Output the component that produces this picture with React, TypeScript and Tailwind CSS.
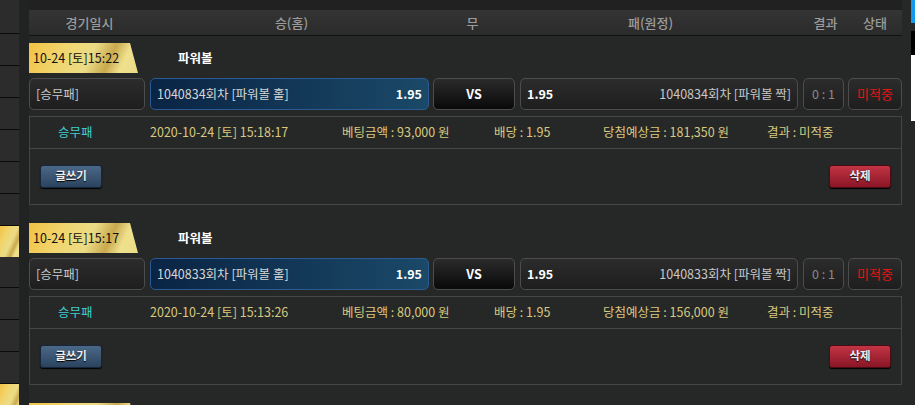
import React from 'react'

const gold =
  'bg-[linear-gradient(115deg,#f2c244_0%,#f1d56e_30%,#ecdc86_55%,#c9a94e_72%,#efe08e_84%,#eadb86_100%)]'

type Bet = {
  time: string
  round: string
  placed: string
  amount: string
  payout: string
}

const bets: Bet[] = [
  { time: '10-24 [토]15:22', round: '1040834', placed: '2020-10-24 [토] 15:18:17', amount: '93,000', payout: '181,350' },
  { time: '10-24 [토]15:17', round: '1040833', placed: '2020-10-24 [토] 15:13:26', amount: '80,000', payout: '156,000' },
  { time: '10-24 [토]15:12', round: '1040832', placed: '2020-10-24 [토] 15:08:40', amount: '50,000', payout: '97,500' },
]

function Sidebar() {
  const cells = [34, 32, 32, 32, 32, 32, 32, 31, 31, 32, 32, 32, 32]
  return (
    <div className="w-[19px] shrink-0 flex flex-col">
      {cells.map((h, i) => (
        <div
          key={i}
          style={{ height: h }}
          className={
            i === 7 || i === 12
              ? `${gold} shrink-0`
              : 'shrink-0 bg-[#2c2c2c] border-b border-[#0b0b0b]'
          }
        />
      ))}
    </div>
  )
}

function Header() {
  return (
    <div className="h-[26px] shrink-0 flex items-center bg-[linear-gradient(#343434,#2b2b2b)] border-b border-[#111] text-[13px] font-medium text-[#9c9c9c]">
      <div className="w-[121px] text-center">경기일시</div>
      <div className="w-[283px] text-center">승(홈)</div>
      <div className="w-[87px] text-center pr-[8px]">무</div>
      <div className="w-[283px] text-center pr-[22px]">패(원정)</div>
      <div className="w-[45px] text-center">결과</div>
      <div className="w-[54px] text-center">상태</div>
    </div>
  )
}

const box =
  'h-[32px] shrink-0 rounded-[5px] border flex items-center text-[12.5px]'
const dark = 'border-[#4c4c4c] bg-[linear-gradient(#2c2c2c,#1e1e1e)]'

function Card({ bet }: { bet: Bet }) {
  return (
    <div className="shrink-0 pt-[7px] pb-[11px]">
      <div className="flex items-center h-[30px]">
        <div
          className={`${gold} w-[109px] h-[30px] flex items-center pl-[4px] text-[12.5px] text-[#111] [clip-path:polygon(0_0,101px_0,109px_100%,0_100%)]`}
        >
          {bet.time}
        </div>
        <div className="ml-[40px] text-[12.5px] font-bold text-white">파워볼</div>
      </div>

      <div className="mt-[5px] flex">
        <div className={`${box} ${dark} w-[116px] pl-[6px] text-[#c8c8c8]`}>
          [승무패]
        </div>
        <div className={`${box} ml-[5px] w-[279px] px-[6px] justify-between border-[#2c5a92] bg-[linear-gradient(90deg,#0a2444,#1b4968)] text-[#d6d6d6]`}>
          <span>{bet.round}회차 [파워볼 홀]</span>
          <span className="font-bold text-white">1.95</span>
        </div>
        <div className={`${box} ml-[4px] w-[82px] justify-center border-[#4c4c4c] bg-[linear-gradient(#2b2b2b,#090909)] font-bold text-white`}>
          VS
        </div>
        <div className={`${box} ${dark} ml-[5px] w-[278px] px-[6px] justify-between text-[#c8c8c8]`}>
          <span className="font-bold text-white">1.95</span>
          <span>{bet.round}회차 [파워볼 짝]</span>
        </div>
        <div className={`${box} ${dark} ml-[5px] w-[41px] justify-center text-[#8a8a8a]`}>
          0 : 1
        </div>
        <div className={`${box} ${dark} ml-[4px] w-[54px] justify-center text-[13px] text-[#e51515]`}>
          미적중
        </div>
      </div>

      <div className="mt-[6px] w-[873px] border border-[#454545]">
        <div className="h-[32px] flex items-center border-b border-[#454545] text-[12.5px] text-[#d9c97f]">
          <span className="w-[120px] pl-[28px] text-[#3fcfcf]">승무패</span>
          <span className="w-[192px]">{bet.placed}</span>
          <span className="w-[152px]">베팅금액 : {bet.amount} 원</span>
          <span className="w-[109px]">배당 : 1.95</span>
          <span className="w-[164px]">당첨예상금 : {bet.payout} 원</span>
          <span>결과 : 미적중</span>
        </div>
        <div className="h-[55px] flex items-center justify-between px-[10px] pb-[1px]">
          <button className="w-[62px] h-[23px] rounded-[3px] border border-[#17253a] bg-[linear-gradient(#4b6888,#2b435e)] text-[11.5px] font-bold text-[#eeeeee] shadow-[0_1px_1px_#000] [text-shadow:0_1px_1px_#000]">
            글쓰기
          </button>
          <button className="w-[62px] h-[23px] rounded-[3px] border border-[#4a0d15] bg-[linear-gradient(#c23444,#8a1626)] text-[11.5px] font-bold text-[#eeeeee] shadow-[0_1px_1px_#000] [text-shadow:0_1px_1px_#000]">
            삭제
          </button>
        </div>
      </div>
    </div>
  )
}

export default function App() {
  return (
    <div className="w-[915px] h-[405px] overflow-hidden flex bg-[#262727] font-['Noto_Sans_CJK_KR','Noto_Sans',sans-serif]">
      <Sidebar />
      <div className="w-[10px] shrink-0 bg-[#212222]" />
      <div className="w-[873px] shrink-0 flex flex-col">
        <div className="h-[10px] shrink-0 bg-[#212121]" />
        <Header />
        {bets.map((b) => (
          <Card key={b.round} bet={b} />
        ))}
      </div>
      <div className="w-[9px] shrink-0" />
      <div className="w-[4px] shrink-0 flex flex-col">
        <div className="h-[23px] shrink-0 bg-[#1199ee]" />
        <div className="h-[8px] shrink-0" />
        <div className="h-[24px] shrink-0 bg-black" />
        <div className="h-[66px] shrink-0 bg-white" />
      </div>
    </div>
  )
}
